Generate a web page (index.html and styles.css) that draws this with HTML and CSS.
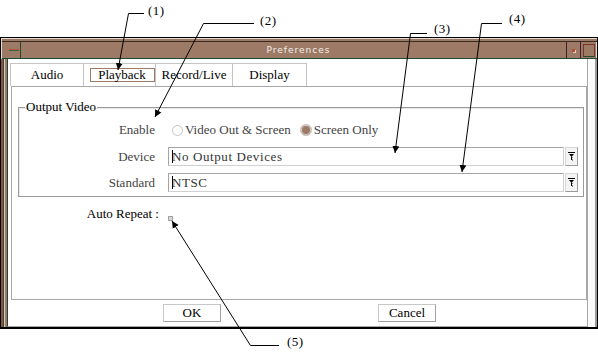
FILE: index.html
```html
<!DOCTYPE html>
<html>
<head>
	<meta charset="utf-8">
	<title>Preferences</title>
	<link rel="stylesheet" href="styles.css">
</head>
<body>
<div class="page">
	<div class="window">
		<div class="titlebar">
			<span class="tb-menu"><i></i></span>
			<span class="tb-title">Preferences</span>
			<span class="tb-min"><i></i></span>
			<span class="tb-max"><i></i></span>
		</div>
		<div class="frame">
			<div class="frame-left"></div>
			<div class="client">
				<div class="tabs">
					<div class="tab tab-audio">Audio</div>
					<div class="tab tab-playback"><span class="focus">Playback</span></div>
					<div class="tab tab-record">Record/Live</div>
					<div class="tab tab-display">Display</div>
				</div>
				<div class="panel">
					<fieldset class="group">
						<legend>Output Video</legend>
						<div class="form">
							<span class="lbl">Enable</span>
							<div class="radios">
								<span class="radio"></span><span class="dim">Video Out &amp; Screen</span>
								<span class="radio checked"></span><span class="dim">Screen Only</span>
							</div>
							<span class="lbl">Device</span>
							<div class="combo">
								<div class="field"><span class="caret"></span>No Output Devices</div>
								<span class="drop"><svg width="7" height="9" viewBox="0 0 7 9"><path d="M0 0h7v1H0z M1 2h5L3.5 5z M3 5h1v3H3z" fill="#000"/><path d="M4 5h1v1H4z M4 7h1v2H4z" fill="#888"/></svg></span>
							</div>
							<span class="lbl">Standard</span>
							<div class="combo">
								<div class="field"><span class="caret"></span>NTSC</div>
								<span class="drop"><svg width="7" height="9" viewBox="0 0 7 9"><path d="M0 0h7v1H0z M1 2h5L3.5 5z M3 5h1v3H3z" fill="#000"/><path d="M4 5h1v1H4z M4 7h1v2H4z" fill="#888"/></svg></span>
							</div>
						</div>
					</fieldset>
					<div class="repeat">
						<span class="repeat-lbl">Auto Repeat :</span>
						<span class="check"></span>
					</div>
				</div>
				<div class="buttons">
					<button class="btn">OK</button>
					<button class="btn">Cancel</button>
				</div>
			</div>
			<div class="frame-right"></div>
		</div>
	</div>

	<svg class="callouts" width="598" height="352" viewBox="0 0 598 352">
		<defs>
			<marker id="ah" markerWidth="8" markerHeight="8" refX="7" refY="4" orient="auto" markerUnits="userSpaceOnUse">
				<path d="M0,0.5 L7,4 L0,7.5 z" fill="#000"/>
			</marker>
		</defs>
		<g fill="none" stroke="#000" stroke-width="1" marker-end="url(#ah)">
			<polyline points="144,13.5 128.5,13.5 118,70"/>
			<polyline points="254,23.5 203.5,23.5 155,117"/>
			<polyline points="427,33.5 410.5,33.5 395,153"/>
			<polyline points="502,23.5 481.5,23.5 462,172"/>
			<polyline points="279,345.5 250.5,345.5 172,221"/>
		</g>
		<g class="num">
			<text x="148" y="15">(1)</text>
			<text x="260" y="25">(2)</text>
			<text x="434" y="33">(3)</text>
			<text x="509" y="23">(4)</text>
			<text x="287" y="346">(5)</text>
		</g>
	</svg>
</div>
</body>
</html>
```

FILE: styles.css
```css
*
{
	padding: 0px;
	margin: 0px;
	box-sizing: border-box;
}
body
{
	color: black;
	background-color: white;
	font-family: "Liberation Serif", serif;
	font-size: 13px;
}
.page
{
	position: relative;
	width: 598px;
	height: 352px;
	padding-top: 37px;
}
.window
{
	width: 598px;
	height: 292px;
	border: 1px solid #000;
	border-bottom-width: 2px;
	padding-top: 3px;
	background-color: #9c7a66;
	box-shadow: inset 1px 1px 0 #e4dcd4;
	display: flex;
	flex-direction: column;
}
.titlebar
{
	height: 18px;
	border-top: 1px solid #3b2a20;
	border-bottom: 1px solid #1f4a2f;
	display: flex;
	align-items: stretch;
	margin-left: 1px;
}
.tb-menu
{
	width: 19px;
	border-right: 1px solid #1f4a2f;
	display: flex;
	align-items: center;
	padding-left: 7px;
}
.tb-menu i
{
	display: block;
	width: 10px;
	height: 2px;
	border-top: 1px solid #c0523a;
	border-bottom: 1px solid #2e6a45;
}
.tb-title
{
	flex: 1;
	text-align: center;
	color: #f4eee8;
	font-family: "DejaVu Sans", sans-serif;
	font-size: 9px;
	letter-spacing: 1px;
	line-height: 16px;
	padding-left: 10px;
}
.tb-min
{
	width: 15px;
	border-left: 1px solid #3d1f2f;
	border-right: 1px solid #3d1f2f;
	display: flex;
	align-items: center;
	justify-content: center;
}
.tb-min i
{
	display: block;
	width: 3px;
	height: 3px;
	background-color: #c04a30;
	box-shadow: 1px 1px 0 #d8d0c0;
}
.tb-max
{
	width: 16px;
	display: flex;
	align-items: center;
	justify-content: center;
	border-right: 1px solid #e4dcd4;
}
.tb-max i
{
	display: block;
	width: 12px;
	height: 13px;
	border: 1px solid #7a3424;
	border-bottom-color: #1f4a2f;
}
.frame
{
	flex: 1;
	display: flex;
}
.frame-left
{
	width: 6px;
	background: linear-gradient(to right, #8a5444 0 2px, #2c4a34 2px 3px, #d8ccc0 3px 4px, #9c7a66 4px 6px);
}
.client
{
	flex: 1;
	background-color: #fff;
	border-left: 1px solid #1f4a2f;
	border-right: 1px solid #a8a8a8;
	border-bottom: 1px solid #a8a8a8;
	padding-top: 4px;
	display: flex;
	flex-direction: column;
}
.frame-right
{
	width: 9px;
	background-color: #fbfbfb;
	border-right: 2px solid #9a9a9a;
}
.tabs
{
	display: flex;
	height: 23px;
	margin-left: 2px;
}
.tab
{
	height: 23px;
	border: 1px solid #c4c4c4;
	border-bottom: none;
	text-align: center;
	line-height: 22px;
	margin-left: -1px;
}
.tab-audio
{
	width: 74px;
	margin-left: 0px;
}
.tab-playback
{
	width: 73px;
	padding-left: 5px;
}
.tab-record
{
	width: 78px;
}
.tab-display
{
	width: 75px;
}
.focus
{
	display: inline-block;
	width: 65px;
	height: 14px;
	line-height: 12px;
	border: 1px solid #9c7a66;
	vertical-align: middle;
	margin-top: -2px;
}
.panel
{
	height: 214px;
	margin-left: 3px;
	border: 1px solid #a8a8a8;
	padding-top: 13px;
}
.group
{
	margin: 0px 2px 0px 6px;
	border: 1px solid #9a9a9a;
	box-shadow: inset 1px 1px 0 #e8e8e8;
	padding: 6px 5px 4px 0px;
}
.group legend
{
	margin-left: 6px;
	padding: 0px 1px;
	line-height: 14px;
}
.form
{
	display: grid;
	grid-template-columns: 136px 1fr;
	grid-template-rows: 20px 19px 19px;
	column-gap: 13px;
	row-gap: 7px;
	align-items: center;
}
.lbl
{
	text-align: right;
	color: #444;
}
.dim
{
	color: #444;
}
.radios
{
	display: flex;
	align-items: center;
	padding-left: 4px;
}
.radio
{
	width: 11px;
	height: 11px;
	border-radius: 50%;
	border: 1px solid #c4c4c4;
	margin-right: 2px;
}
.radio.checked
{
	margin-left: 9px;
	background-color: #9c7a66;
	border-color: #c8c8c8;
	box-shadow: inset 0 0 0 1px #ddd2c8;
	width: 12px;
	height: 12px;
}
.combo
{
	display: flex;
	height: 19px;
}
.field
{
	flex: 1;
	border: 1px solid #a4a4a4;
	border-right-color: #d0d0d0;
	border-bottom-color: #d0d0d0;
	padding-left: 3px;
	line-height: 17px;
	color: #333;
	letter-spacing: 0.6px;
	display: flex;
	align-items: center;
}
.caret
{
	width: 1px;
	height: 13px;
	background-color: #000;
	margin-right: -1px;
}
.drop
{
	width: 13px;
	margin-left: 1px;
	border: 1px solid #d8d8d8;
	border-right-color: #9a9a9a;
	border-bottom-color: #9a9a9a;
	background-color: #f4f4f4;
	display: flex;
	align-items: center;
	justify-content: center;
}
.repeat
{
	display: flex;
	align-items: flex-start;
	margin-top: 9px;
	height: 15px;
}
.repeat-lbl
{
	width: 147px;
	text-align: right;
	line-height: 15px;
}
.check
{
	width: 5px;
	height: 5px;
	margin-left: 9px;
	margin-top: 10px;
	border: 1px solid #a0a0a0;
	background-color: #d8d8d8;
}
.buttons
{
	display: flex;
	padding: 4px 0px 0px 155px;
	gap: 157px;
}
.btn
{
	width: 58px;
	height: 18px;
	background-color: #fff;
	border: 1px solid #c8c8c8;
	border-right-color: #a0a0a0;
	border-bottom-color: #a0a0a0;
	font-family: "Liberation Serif", serif;
	font-size: 13px;
	color: #000;
	line-height: 16px;
}
.callouts
{
	position: absolute;
	left: 0px;
	top: 0px;
	pointer-events: none;
}
.num text
{
	font-family: "Liberation Serif", serif;
	font-size: 13px;
	letter-spacing: 0.5px;
	fill: #000;
}
```
